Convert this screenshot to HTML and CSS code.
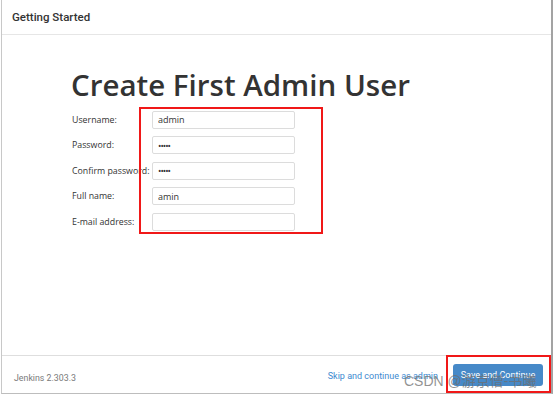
FILE: index.html
```html
<!DOCTYPE html>
<html lang="en">
<head>
    <meta charset="UTF-8">
    <meta name="viewport" content="width=device-width, initial-scale=1.0">
    <title>Getting Started</title>
    <link rel="stylesheet" href="styles.css">
</head>
<body>
    <div class="dialog">
        <!-- Header -->
        <div class="dialog-header">Getting Started</div>

        <!-- Main content -->
        <div class="dialog-body">
            <h1>Create First Admin User</h1>
            <form class="admin-form">
                <label for="username">Username:</label>
                <input id="username" type="text" value="admin">

                <label for="password">Password:</label>
                <input id="password" type="password" value="12345">

                <label for="confirm">Confirm password:</label>
                <input id="confirm" type="password" value="12345">

                <label for="fullname">Full name:</label>
                <input id="fullname" type="text" value="amin">

                <label for="email">E-mail address:</label>
                <input id="email" type="text" value="">
            </form>
        </div>

        <!-- Footer -->
        <div class="dialog-footer">
            <span class="version">Jenkins 2.303.3</span>
            <div class="actions">
                <a href="#" class="skip-link">Skip and continue as admin</a>
                <button class="btn-primary">Save and Continue</button>
            </div>
        </div>
    </div>

    <!-- annotations drawn over the screenshot -->
    <div class="mark mark-form"></div>
    <div class="mark mark-button"></div>
    <div class="watermark">CSDN @游京僧-书曦</div>
</body>
</html>
```

FILE: styles.css
```css
body {
    margin: 0;
    padding: 0;
    background-color: #fff;
    position: relative;
    width: 554px;
    height: 396px;
    overflow: hidden;
}

.dialog {
    margin-left: 1px;
    width: 552px;
    height: 394px;
    box-sizing: border-box;
    border-left: 1px solid #c8c8c8;
    border-right: 2px solid #a3a3a3;
    border-bottom: 1px solid #bdbdbd;
    display: flex;
    flex-direction: column;
    background-color: #fff;
}

/* Header */
.dialog-header {
    height: 35px;
    box-sizing: border-box;
    border-bottom: 1px solid #e6e6e6;
    padding-left: 10px;
    display: flex;
    align-items: center;
    font-family: Roboto, "Liberation Sans", sans-serif;
    font-weight: 500;
    font-size: 11.5px;
    color: #333;
}

/* Content */
.dialog-body {
    flex: 1;
    padding-left: 69px;
}

.dialog-body h1 {
    font-family: "Open Sans", "Liberation Sans", sans-serif;
    font-weight: 600;
    font-size: 29.5px;
    line-height: 30.5px;
    color: #333;
    margin: 35px 0 10px 0;
}

.admin-form {
    display: grid;
    grid-template-columns: 80px 143px;
    grid-auto-rows: 18px;
    row-gap: 7.5px;
    margin-left: 1px;
    align-items: center;
}

.admin-form label {
    font-family: "Open Sans", "Liberation Sans", sans-serif;
    font-size: 8.8px;
    color: #333;
    white-space: nowrap;
}

.admin-form input {
    height: 18px;
    box-sizing: border-box;
    border: 1px solid #dcdcdc;
    border-radius: 2px;
    padding: 0 5px;
    font-family: "Open Sans", "Liberation Sans", sans-serif;
    font-size: 9px;
    color: #333;
    outline: none;
}

.admin-form input[type="password"] {
    font-size: 9px;
    letter-spacing: -1px;
}

/* Footer */
.dialog-footer {
    height: 37px;
    border-top: 1px solid #dedede;
    display: flex;
    justify-content: space-between;
    align-items: center;
    padding: 0 8px 0 12px;
    font-family: Roboto, "Liberation Sans", sans-serif;
}

.version {
    font-size: 8.8px;
    color: #7a7a7a;
    padding-top: 6px;
}

.actions {
    display: flex;
    align-items: center;
    gap: 15px;
}

.skip-link {
    font-size: 9px;
    color: #3e8ad0;
    text-decoration: none;
    padding-top: 2px;
}

.btn-primary {
    width: 90px;
    height: 22px;
    border: none;
    border-radius: 3px;
    background-color: #4689c8;
    color: #fff;
    font-family: Roboto, "Liberation Sans", sans-serif;
    font-size: 9px;
    padding: 0;
}

/* Red annotation boxes */
.mark {
    position: absolute;
    border: 2px solid #f01818;
    box-sizing: border-box;
}

.mark-form {
    left: 139px;
    top: 107px;
    width: 184px;
    height: 127px;
}

.mark-button {
    left: 446px;
    top: 355px;
    width: 105px;
    height: 38px;
}

.watermark {
    position: absolute;
    left: 404px;
    top: 370px;
    font-family: "Liberation Sans", "Noto Sans CJK SC", sans-serif;
    font-size: 14px;
    color: rgba(110, 110, 110, 0.75);
    white-space: nowrap;
}
```
